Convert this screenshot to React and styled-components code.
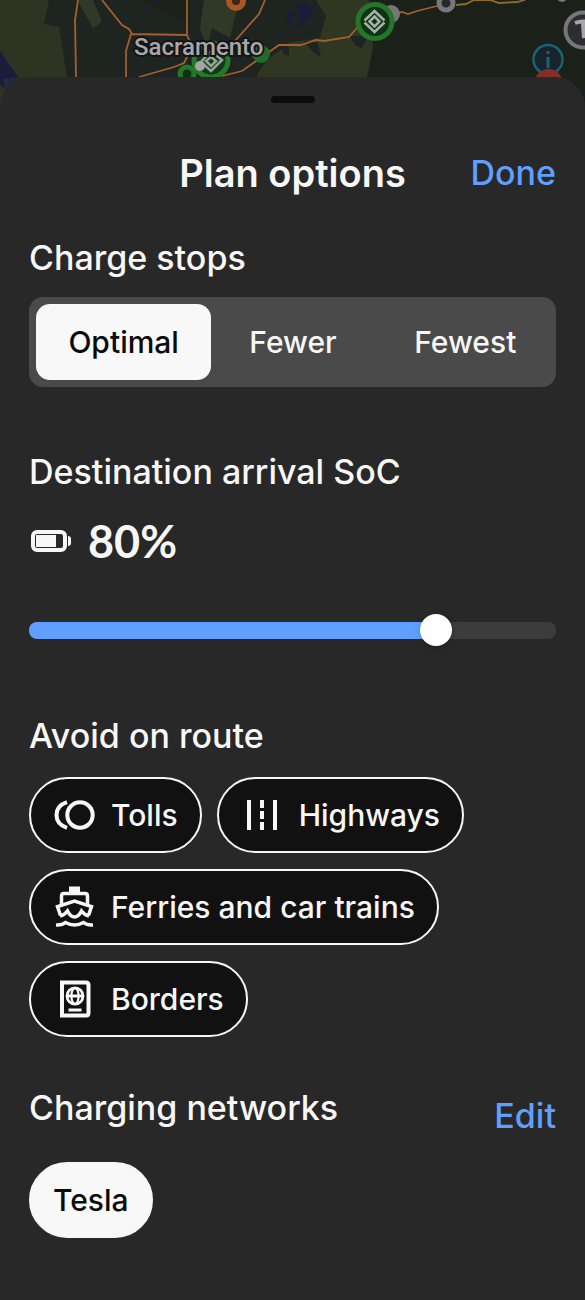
import React, { useState } from 'react';
import styled, { createGlobalStyle } from 'styled-components';

const GlobalStyle = createGlobalStyle`
* {
    box-sizing: border-box;
}
body {
    margin: 0;
    background: #282828;
    color: #f7f7f7;
    font-family: Inter, "Liberation Sans", sans-serif;
}
button {
    margin: 0;
    padding: 0;
    border: 0;
    background: none;
    font: inherit;
    color: inherit;
    cursor: pointer;
}
`;

const PageStyles = styled.div`
min-height: 100vh;
display: flex;
flex-direction: column;
`;

const MapStyles = styled.svg`
display: block;
width: 100%;
height: 107px;
background: #1b2119;
`;

const Sheet = styled.main`
flex: 1;
position: relative;
margin-top: -30px;
padding: 19px 29px 62px;
border-radius: 30px 30px 0 0;
background: #282828;
`;

const Handle = styled.div`
width: 44px;
height: 7px;
margin: 0 auto;
border-radius: 4px;
background: #0c0c0c;
`;

const SheetHeader = styled.header`
display: grid;
grid-template-columns: 1fr auto 1fr;
align-items: center;
margin-top: 46px;
`;

const Title = styled.h1`
grid-column: 2;
margin: 0;
font-size: 38px;
line-height: 48px;
font-weight: 600;
`;

const TextButton = styled.button`
justify-self: end;
font-size: 34px;
line-height: 40px;
font-weight: 500;
color: #609fff;
`;

const Section = styled.section`
margin-top: ${props => props.$space}px;
`;

const SectionTitle = styled.h2`
margin: 0;
font-size: 34px;
line-height: 40px;
font-weight: 500;
`;

const Segments = styled.div`
display: grid;
grid-template-columns: 175fr 163fr 181fr;
margin-top: 19px;
padding: 7px 0 7px 7px;
border-radius: 14px;
background: #4a4a4a;
`;

const Segment = styled.button`
height: 76px;
border-radius: 14px;
font-size: 30px;
font-weight: 500;
color: ${props => props.$active ? '#0b0b0b' : '#f7f7f7'};
background: ${props => props.$active ? '#f8f8f8' : 'transparent'};
`;

const Level = styled.div`
display: flex;
align-items: center;
gap: 16px;
margin-top: 25px;
font-family: Lato, "Open Sans", sans-serif;
font-size: 45px;
line-height: 48px;
font-weight: 700;
`;

const Slider = styled.input`
appearance: none;
display: block;
width: 100%;
height: 32px;
margin: 49px 0 0;
background: none;
cursor: pointer;
&::-webkit-slider-runnable-track {
    height: 17px;
    border-radius: 8px;
    background: linear-gradient(to right, #609fff ${props => props.$fill}%, #3c3c3c ${props => props.$fill}%);
}
&::-webkit-slider-thumb {
    appearance: none;
    width: 32px;
    height: 32px;
    margin-top: -8px;
    border-radius: 50%;
    background: #fff;
    box-shadow: 0 2px 6px rgba(0, 0, 0, 0.2);
}
`;

const Chips = styled.div`
display: flex;
flex-wrap: wrap;
gap: 16px 15px;
margin-top: ${props => props.$space}px;
`;

const Chip = styled.button`
display: flex;
align-items: center;
gap: 16px;
height: 76px;
padding: 0 22px;
border: 2px solid #f7f7f7;
border-radius: 38px;
font-size: 30px;
font-weight: 500;
color: ${props => props.$selected ? '#0b0b0b' : '#f7f7f7'};
background: ${props => props.$selected ? '#f8f8f8' : '#111'};
`;

const SectionHeader = styled.div`
display: flex;
justify-content: space-between;
align-items: flex-end;
height: 48px;
h2 {
    align-self: flex-start;
}
`;

const ChipIcon = ({ children }) => (
    <svg width="42" height="42" viewBox="0 0 42 42" fill="none" stroke="currentColor" strokeWidth="4" aria-hidden="true">
        {children}
    </svg>
);

const TollsIcon = () => (
    <ChipIcon>
        <circle cx="27" cy="21" r="12.700" />
        <path d="M14 8.200C7 10.500 3.500 15.500 3.500 21s3.500 10.500 10.500 12.800" />
    </ChipIcon>
);

const HighwaysIcon = () => (
    <ChipIcon>
        <path d="M8 6v30M34 6v30M21 6v8M21 17v8M21 28v8" />
    </ChipIcon>
);

const FerryIcon = () => (
    <ChipIcon>
        <path d="M16 .500h11v7H16z" fill="currentColor" stroke="none" />
        <path d="M8.500 18.500V10q0-2.500 2.500-2.500h21q2.500 0 2.500 2.500v8.500" strokeWidth="3.500" />
        <path d="M7.500 29.500L4.500 20.500L21.500 15l17 5.500L35.500 29.500" strokeWidth="3.500" />
        <path d="M7 30q4.500-1 7.500-5q3 6 7 6t7-6q3 4 7.500 5" strokeWidth="3.500" />
        <path d="M3 39q6 .500 9.500-2.500q4.500 2.500 9 2.500t9-2.500q3.500 3 9.500 2.500" strokeWidth="3.500" />
    </ChipIcon>
);

const PassportIcon = () => (
    <ChipIcon>
        <path d="M9 4.500h24q2.500 0 2.500 2.500v28q0 2.500-2.500 2.500H9z" />
        <circle cx="22" cy="18" r="8" strokeWidth="2.800" />
        <ellipse cx="22" cy="18" rx="3.600" ry="8" strokeWidth="2.200" />
        <path d="M14 18h16M15.500 32h13" strokeWidth="2.800" />
    </ChipIcon>
);

const BatteryIcon = () => (
    <svg width="43" height="24" viewBox="0 0 43 24" aria-hidden="true">
        <rect x="4" y="3" width="32" height="18" rx="4" fill="none" stroke="currentColor" strokeWidth="4" />
        <rect x="7" y="6" width="20" height="12" fill="currentColor" />
        <path d="M39 7q3 0 3 3v4q0 3-3 3z" fill="currentColor" />
    </svg>
);

const Map = () => (
    <MapStyles viewBox="0 0 585 107" preserveAspectRatio="xMidYMin slice" role="img" aria-label="Map around Sacramento">
        <rect width="585" height="107" fill="#1b2119" />
        <path d="M0 0h140l50 26v-26h140v107H0z" fill="#1e2520" />
        <path d="M0 0h49l-5 24 15 3 8 50v30H0z" fill="#2d3522" />
        <path d="M77 0h16l9 22-9 6zM204 0h35l-9 38-18-10-5 20-7-20z" fill="#303827" />
        <path d="M257 75q9-18 30-28l10-47h72l4 48-6 29v30H250z" fill="#2f3723" />
        <path d="M286 0h30l10 16-6 22-34 5zM350 36l18 0-6 12q-8-1-12-12zM303 40l15 3 3 15-9-7zM283 47l6 0v9l-6-2z" fill="#1e2520" />
        <path d="M0 51l18 26-12 13-6-5zM287 13l12-4 5-9 5 8 7-6-4 12-12 13-13-5zM300 0l-12 26 12-3zM151 0h12l-4 3z" fill="#191d3b" />
        <path d="M4 79l14-2-14 16z" fill="#232a3d" />
        <g fill="none" stroke="#a35f2d" strokeWidth="1.800">
            <path d="M78 0l-3 20 1 57M102 0l20 25 7 4 3 5 55 1M187 0v35l5 12-8 16-10 4-35 10M131 34l-5 17v26M265 0l-6 14-25 28-20 22M222 76l20-5 20-14 17-12h22l15-5 8 1 25-4 8-9 6-7" />
            <path d="M394 14l8-2 6 2 9-3 20-5" />
            <path d="M456 5l10-1 8-4 16 0 9 3 18-1 8-2" stroke="#8e6b2c" />
        </g>
        <circle cx="391" cy="14" r="9" fill="#777779" />
        <circle cx="446" cy="3" r="7" fill="#262728" stroke="#777779" strokeWidth="5" />
        <circle cx="562" cy="-3" r="5" fill="#777779" />
        <circle cx="236" cy="1" r="7" fill="#432419" stroke="#a85824" strokeWidth="6" />
        <circle cx="261" cy="54" r="9" fill="#246b29" />
        <circle cx="187" cy="74" r="7" fill="#0f3312" stroke="#237729" strokeWidth="5" />
        <circle cx="211" cy="60" r="17" fill="#123a18" stroke="#247a29" strokeWidth="5" />
        <path d="M211 51l11 9-11 11-10-9zM211 57l5 4-5 5-5-5z" fill="none" stroke="#98a39a" strokeWidth="2.500" />
        <circle cx="200" cy="66" r="5" fill="#a5a5a8" />
        <circle cx="375" cy="21.500" r="17" fill="#0e3413" stroke="#25752b" strokeWidth="5" />
        <path d="M364.500 20.500l10-9.500 10 9.500M364.500 22.500l10 9.500 10-9.500" fill="none" stroke="#a7b0a9" strokeWidth="2.500" />
        <path d="M374.500 16.500l5 5-5 5-5-5z" fill="none" stroke="#a7b0a9" strokeWidth="2.500" />
        <circle cx="583" cy="30" r="17.500" fill="#2d2d2f" stroke="#77777a" strokeWidth="4" />
        <path d="M575 23q8-3 16 0M583 23l1 15" fill="none" stroke="#a7a7a9" strokeWidth="4" />
        <circle cx="548" cy="59.500" r="14.500" fill="#17242a" stroke="#1b6178" strokeWidth="2.500" />
        <path d="M548 57v11M548 51v3" stroke="#1b6178" strokeWidth="3" />
        <circle cx="548.500" cy="83" r="14" fill="#842e2a" />
        <text x="134" y="55" fill="#a8a8aa" stroke="#141414" strokeWidth="4" paintOrder="stroke" strokeLinejoin="round" fontFamily="Roboto, sans-serif" fontSize="24" fontWeight="500">Sacramento</text>
    </MapStyles>
);

const stops = ['Optimal', 'Fewer', 'Fewest'];

const avoidOptions = [
    { name: 'Tolls', Icon: TollsIcon },
    { name: 'Highways', Icon: HighwaysIcon },
    { name: 'Ferries and car trains', Icon: FerryIcon },
    { name: 'Borders', Icon: PassportIcon },
];

const minSoc = 5;
const maxSoc = 100;

const App = () => {
    const [stop, setStop] = useState('Optimal');
    const [soc, setSoc] = useState(80);
    const [avoid, setAvoid] = useState([]);

    const toggleAvoid = (name) => {
        setAvoid(avoid.includes(name) ? avoid.filter(item => item !== name) : [...avoid, name]);
    };

    return (
        <PageStyles>
            <GlobalStyle />
            <Map />
            <Sheet>
                <Handle />
                <SheetHeader>
                    <Title>Plan options</Title>
                    <TextButton type="button">Done</TextButton>
                </SheetHeader>
                <Section $space={41}>
                    <SectionTitle>Charge stops</SectionTitle>
                    <Segments role="group" aria-label="Charge stops">
                        {stops.map(name => (
                            <Segment key={name} type="button" $active={stop === name} aria-pressed={stop === name} onClick={() => setStop(name)}>
                                {name}
                            </Segment>
                        ))}
                    </Segments>
                </Section>
                <Section $space={65}>
                    <SectionTitle as="label" htmlFor="soc">Destination arrival SoC</SectionTitle>
                    <Level>
                        <BatteryIcon />
                        <span>{soc}%</span>
                    </Level>
                    <Slider
                        id="soc"
                        type="range"
                        min={minSoc}
                        max={maxSoc}
                        value={soc}
                        $fill={(soc - minSoc) / (maxSoc - minSoc) * 100}
                        onChange={e => setSoc(Number(e.target.value))}
                    />
                </Section>
                <Section $space={70}>
                    <SectionTitle>Avoid on route</SectionTitle>
                    <Chips $space={21}>
                        {avoidOptions.map(({ name, Icon }) => (
                            <Chip key={name} type="button" $selected={avoid.includes(name)} aria-pressed={avoid.includes(name)} onClick={() => toggleAvoid(name)}>
                                <Icon />
                                {name}
                            </Chip>
                        ))}
                    </Chips>
                </Section>
                <Section $space={51}>
                    <SectionHeader>
                        <SectionTitle>Charging networks</SectionTitle>
                        <TextButton type="button">Edit</TextButton>
                    </SectionHeader>
                    <Chips $space={26}>
                        <Chip type="button" $selected>Tesla</Chip>
                    </Chips>
                </Section>
            </Sheet>
        </PageStyles>
    );
};

export default App;
